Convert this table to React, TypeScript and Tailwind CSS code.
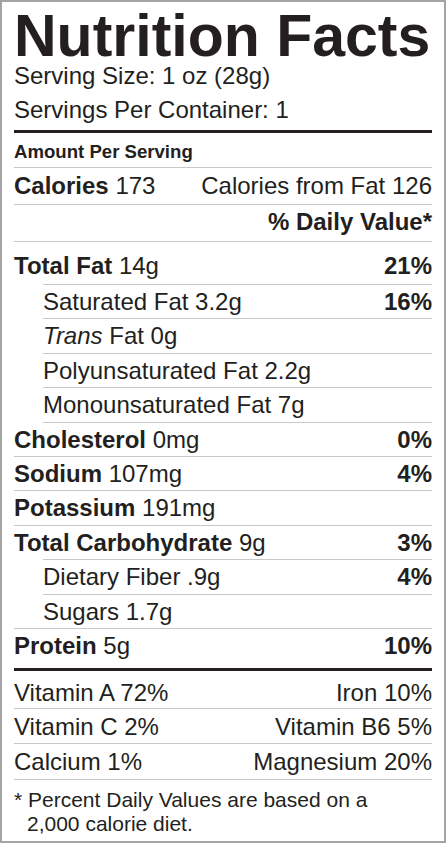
const Row = ({
  label,
  value,
  pct,
  indent,
  boldLabel,
  italic
}: any) => {
  return (
    <div
      className={
        'flex justify-between h-[34.4px] leading-[33.4px] border-b border-[#c8c8c8] ' +
        (indent ? 'ml-[29px]' : '')
      }
    >
      <span>
        {italic ? <i>{italic}</i> : null}
        {boldLabel ? <b className="font-bold">{label}</b> : label} {value}
      </span>
      {pct ? <b className="font-bold">{pct}</b> : null}
    </div>
  )
}

export default function App() {
  return (
    <div className="w-[446px] h-[843px] bg-white border-2 border-[#a4a4a4] px-[12px] pt-[12px] text-[#231f20] text-[24px] font-['Liberation_Sans',Arial,sans-serif]">
      <h1 className="text-[59px] font-bold leading-[45px] whitespace-nowrap">
        Nutrition Facts
      </h1>
      <div className="leading-[34px]">Serving Size: 1 oz (28g)</div>
      <div className="leading-[33px]">Servings Per Container: 1</div>
      <div className="mt-[4px] h-[3px] bg-[#231f20]"></div>

      <div className="h-[35px] pt-[4px] leading-[30px] text-[18.6px] font-bold border-b border-[#c8c8c8]">
        Amount Per Serving
      </div>
      <div className="flex justify-between h-[37px] leading-[36px] border-b border-[#c8c8c8]">
        <span>
          <b className="font-bold">Calories</b> 173
        </span>
        <span>Calories from Fat 126</span>
      </div>
      <div className="flex justify-end h-[37px] leading-[33px] border-b border-[#c8c8c8] font-bold">
        % Daily Value*
      </div>

      <div className="flex justify-between h-[42px] pt-[6px] leading-[36px]">
        <span>
          <b className="font-bold">Total Fat</b> 14g
        </span>
        <b className="font-bold">21%</b>
      </div>
      <div className="ml-[29px] border-b border-[#c8c8c8]"></div>
      <Row label="Saturated Fat" value="3.2g" pct="16%" indent />
      <Row italic="Trans" label=" Fat" value="0g" indent />
      <Row label="Polyunsaturated Fat" value="2.2g" indent />
      <Row label="Monounsaturated Fat" value="7g" indent />
      <Row label="Cholesterol" value="0mg" pct="0%" boldLabel />
      <Row label="Sodium" value="107mg" pct="4%" boldLabel />
      <Row label="Potassium" value="191mg" boldLabel />
      <div className="flex justify-between h-[33.4px] leading-[33.4px]">
        <span>
          <b className="font-bold">Total Carbohydrate</b> 9g
        </span>
        <b className="font-bold">3%</b>
      </div>
      <div className="ml-[29px] border-b border-[#c8c8c8]"></div>
      <Row label="Dietary Fiber" value=".9g" pct="4%" indent />
      <div className="ml-[29px] flex justify-between h-[33.4px] leading-[33.4px]">
        <span>Sugars 1.7g</span>
      </div>
      <div className="border-b border-[#c8c8c8]"></div>

      <div className="flex justify-between h-[39px] leading-[34px]">
        <span>
          <b className="font-bold">Protein</b> 5g
        </span>
        <b className="font-bold">10%</b>
      </div>
      <div className="h-[3px] bg-[#231f20]"></div>

      <div className="flex justify-between h-[38px] pt-[5px] leading-[33px] border-b border-[#c8c8c8]">
        <span>Vitamin A 72%</span>
        <span>Iron 10%</span>
      </div>
      <div className="flex justify-between h-[35px] pt-[1px] leading-[34px] border-b border-[#c8c8c8]">
        <span>Vitamin C 2%</span>
        <span>Vitamin B6 5%</span>
      </div>
      <div className="flex justify-between h-[36px] leading-[35px] border-b border-[#c8c8c8]">
        <span>Calcium 1%</span>
        <span>Magnesium 20%</span>
      </div>

      <div className="pt-[8px] text-[21px] leading-[24px]">
        <div>* Percent Daily Values are based on a</div>
        <div className="pl-[13px]">2,000 calorie diet.</div>
      </div>
    </div>
  )
}
